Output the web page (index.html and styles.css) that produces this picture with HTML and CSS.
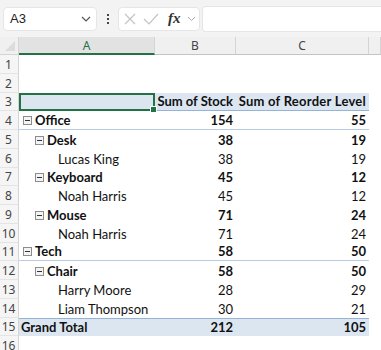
FILE: index.html
```html
<!DOCTYPE html>
<html lang="en">
<head>
  <meta charset="UTF-8" />
  <title>Pivot Table</title>
  <link rel="stylesheet" href="styles.css">
</head>
<body>
<div class="toolbar">
  <div class="name-box">
    <span>A3</span>
    <svg class="chev" width="10" height="6" viewBox="0 0 10 6"><path d="M1 1l4 4 4-4" fill="none" stroke="#555" stroke-width="1.2"/></svg>
  </div>
  <div class="dots"><i></i><i></i><i></i></div>
  <div class="fx-box">
    <svg width="14" height="14" viewBox="0 0 14 14"><path d="M2 2l10 10M12 2L2 12" stroke="#c4c4c4" stroke-width="1.2"/></svg>
    <svg width="16" height="14" viewBox="0 0 16 14"><path d="M1 7l5 5L15 2" fill="none" stroke="#c4c4c4" stroke-width="1.2"/></svg>
    <span class="fx">fx</span>
    <svg width="9" height="6" viewBox="0 0 9 6"><path d="M1 1l3.5 3.5L8 1" fill="none" stroke="#aaa" stroke-width="1"/></svg>
  </div>
  <div class="formula"></div>
</div>

<div class="sheet">
  <div class="corner"><span class="tri"></span></div>
  <div class="col-head active">A</div>
  <div class="col-head">B</div>
  <div class="col-head">C</div>
  <div class="col-head last"></div>

  <div class="row-head">1</div><div class="cell"></div><div class="cell"></div><div class="cell"></div><div class="cell"></div>
  <div class="row-head">2</div><div class="cell"></div><div class="cell"></div><div class="cell"></div><div class="cell"></div>

  <div class="row-head">3</div>
  <div class="cell hdr selected"><span class="handle"></span></div>
  <div class="cell hdr b num">Sum of Stock</div>
  <div class="cell hdr b num wide">Sum of Reorder Level</div>
  <div class="cell"></div>

  <div class="row-head">4</div>
  <div class="cell b lvl1 sep"><span class="box"></span>Office</div>
  <div class="cell b num sep">154</div>
  <div class="cell b num sep">55</div>
  <div class="cell"></div>

  <div class="row-head">5</div>
  <div class="cell b lvl2"><span class="box"></span>Desk</div>
  <div class="cell b num">38</div>
  <div class="cell b num">19</div>
  <div class="cell"></div>

  <div class="row-head">6</div>
  <div class="cell lvl3">Lucas King</div>
  <div class="cell num">38</div>
  <div class="cell num">19</div>
  <div class="cell"></div>

  <div class="row-head">7</div>
  <div class="cell b lvl2"><span class="box"></span>Keyboard</div>
  <div class="cell b num">45</div>
  <div class="cell b num">12</div>
  <div class="cell"></div>

  <div class="row-head">8</div>
  <div class="cell lvl3">Noah Harris</div>
  <div class="cell num">45</div>
  <div class="cell num">12</div>
  <div class="cell"></div>

  <div class="row-head">9</div>
  <div class="cell b lvl2"><span class="box"></span>Mouse</div>
  <div class="cell b num">71</div>
  <div class="cell b num">24</div>
  <div class="cell"></div>

  <div class="row-head">10</div>
  <div class="cell lvl3">Noah Harris</div>
  <div class="cell num">71</div>
  <div class="cell num">24</div>
  <div class="cell"></div>

  <div class="row-head">11</div>
  <div class="cell b lvl1 sep"><span class="box"></span>Tech</div>
  <div class="cell b num sep">58</div>
  <div class="cell b num sep">50</div>
  <div class="cell"></div>

  <div class="row-head">12</div>
  <div class="cell b lvl2"><span class="box"></span>Chair</div>
  <div class="cell b num">58</div>
  <div class="cell b num">50</div>
  <div class="cell"></div>

  <div class="row-head">13</div>
  <div class="cell lvl3">Harry Moore</div>
  <div class="cell num">28</div>
  <div class="cell num">29</div>
  <div class="cell"></div>

  <div class="row-head">14</div>
  <div class="cell lvl3">Liam Thompson</div>
  <div class="cell num">30</div>
  <div class="cell num">21</div>
  <div class="cell"></div>

  <div class="row-head">15</div>
  <div class="cell b total first">Grand Total</div>
  <div class="cell b num total">212</div>
  <div class="cell b num total">105</div>
  <div class="cell"></div>

  <div class="row-head">16</div><div class="cell"></div><div class="cell"></div><div class="cell"></div><div class="cell"></div>
</div>
</body>
</html>
```

FILE: styles.css
```css
body, html {
  margin: 0;
  padding: 0;
  background: #fff;
  overflow: hidden;
}

/* Formula bar strip */
.toolbar {
  height: 37px;
  background: #f3f3f3;
  display: flex;
  align-items: center;
  padding: 0 0 0 3px;
  box-sizing: border-box;
  font-family: "Liberation Sans", Arial, sans-serif;
}
.name-box {
  width: 94px;
  height: 24px;
  background: #fff;
  border-radius: 4px;
  border: 1px solid #e6e6e6;
  box-sizing: border-box;
  display: flex;
  align-items: center;
  justify-content: space-between;
  padding: 0 5px 0 6px;
  font-size: 13px;
  color: #222;
}
.chev {
  margin-top: 1px;
}
.dots {
  width: 20px;
  display: flex;
  flex-direction: column;
  align-items: center;
  gap: 2px;
  margin-left: 1px;
}
.dots i {
  width: 2px;
  height: 2px;
  background: #444;
}
.fx-box {
  width: 82px;
  height: 24px;
  background: #fff;
  border-radius: 4px;
  border: 1px solid #e6e6e6;
  box-sizing: border-box;
  display: flex;
  align-items: center;
  gap: 6px;
  padding-left: 4px;
}
.fx {
  font-family: "Liberation Serif", serif;
  font-style: italic;
  font-weight: bold;
  font-size: 15px;
  color: #333;
  margin-left: 3px;
}
.formula {
  flex: 1;
  height: 24px;
  margin-left: 2px;
  background: #fff;
  border-radius: 4px 0 0 4px;
  border: 1px solid #e6e6e6;
  border-right: none;
}

/* Grid */
.sheet {
  display: grid;
  grid-template-columns: 19px 136px 81px 133px 1fr;
  grid-template-rows: 18px repeat(16, 18.75px);
  font-family: Lato, "Open Sans", sans-serif;
  font-size: 13px;
  color: #111;
}
.corner {
  background: #f0f0f0;
  border-right: 1px solid #d4d4d4;
  border-bottom: 1px solid #d4d4d4;
  position: relative;
}
.corner .tri {
  position: absolute;
  right: 3px;
  bottom: 3px;
  width: 0;
  height: 0;
  border-left: 10px solid transparent;
  border-bottom: 10px solid #dcdcdc;
}
.col-head {
  background: #f0f0f0;
  border-right: 1px solid #d4d4d4;
  border-bottom: 1px solid #c4c4c4;
  display: flex;
  align-items: center;
  justify-content: center;
  color: #444;
  font-family: "Noto Sans", sans-serif;
  font-size: 12px;
}
.col-head.active {
  background: #e2e2e2;
  color: #217346;
  border-bottom: 2px solid #217346;
}
.row-head {
  background: #f5f5f5;
  border-right: 1px solid #d4d4d4;
  border-bottom: 1px solid #e4e4e4;
  display: flex;
  align-items: flex-end;
  justify-content: center;
  color: #444;
  font-family: "Noto Sans", sans-serif;
  font-size: 12px;
  padding: 0 1px 0 0;
  line-height: 17px;
}
.cell {
  display: flex;
  align-items: flex-end;
  white-space: nowrap;
  box-sizing: border-box;
  line-height: 17px;
}
.b {
  font-weight: bold;
}
.num {
  justify-content: flex-end;
  padding-right: 3px;
}
.wide {
  letter-spacing: 0.25px;
}
.hdr {
  background: #dce6f1;
  border-bottom: 1px solid #95b3d7;
}
.sep {
  border-bottom: 1px solid #b8cce4;
}
.total {
  background: #dce6f1;
  border-top: 1px solid #95b3d7;
}
.lvl1 {
  padding-left: 4px;
}
.lvl2 {
  padding-left: 16px;
}
.lvl3 {
  padding-left: 39px;
}
.first {
  padding-left: 2px;
}
.box {
  width: 7px;
  height: 7px;
  border: 1px solid #8c8c8c;
  background: #f4f4f4;
  margin: 0 3px 4px 0;
  position: relative;
}
.box::after {
  content: "";
  position: absolute;
  left: 1px;
  right: 1px;
  top: 3px;
  height: 1px;
  background: #333;
}

/* Selected cell */
.selected {
  border: 2px solid #217346;
  position: relative;
}
.handle {
  position: absolute;
  right: -4px;
  bottom: -4px;
  width: 5px;
  height: 5px;
  background: #217346;
  border: 1px solid #fff;
}
```
